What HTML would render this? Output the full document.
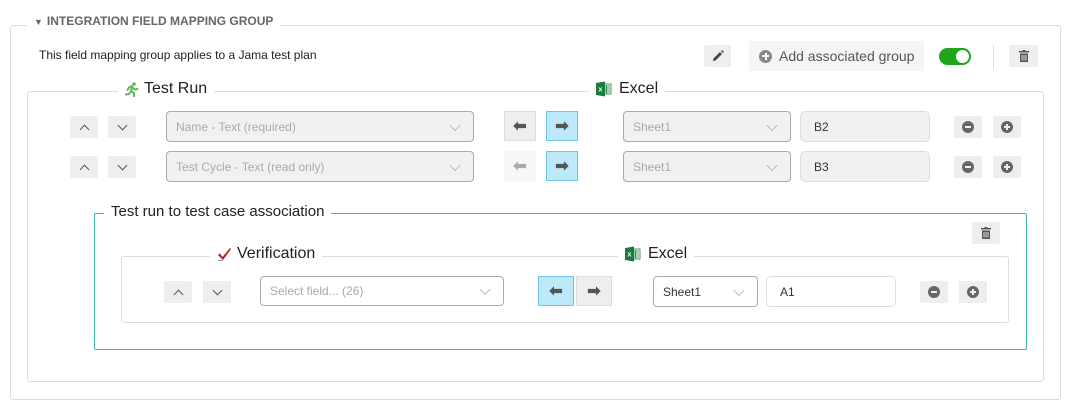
<!DOCTYPE html>
<html><head><style>
body{margin:0;width:1068px;height:416px;background:#fff;font-family:"Liberation Sans",sans-serif;position:relative;overflow:hidden}
.a{position:absolute;box-sizing:border-box}
.box{border:1px solid #ddd;border-radius:3px}
.leg{background:#fff;padding:0 7px;white-space:nowrap}
.btn{background:#eee;border-radius:2px;display:flex;align-items:center;justify-content:center}
.sel{border:1px solid #aaa;border-radius:4px;background:#f1f1f1;font-size:12px;color:#aaa;padding-left:9px;display:flex;align-items:center}
.sel:after{content:"";position:absolute;right:14px;top:50%;width:7px;height:7px;border-right:1.5px solid #bbb;border-bottom:1.5px solid #bbb;transform:translateY(-70%) rotate(45deg)}
.inp{border:1px solid #ddd;border-radius:5px;background:#f1f1f1;font-size:12px;color:#333;padding-left:13px;display:flex;align-items:center}
.ar{border:1px solid #ddd;background:#eee;display:flex;align-items:center;justify-content:center}
.ar.on{background:#bde9f9;border-color:#6cc8ee}
.rc{width:12px;height:12px;border-radius:50%;background:#666;position:relative}
.rc:before{content:"";position:absolute;left:3px;top:5px;width:6px;height:2px;background:#eee}
.rc.p:after{content:"";position:absolute;left:5px;top:3px;width:2px;height:6px;background:#eee}
.chev{width:6px;height:6px;border-left:1.5px solid #555;border-top:1.5px solid #555}
</style></head><body>
<div class="a box" style="left:10px;top:25px;width:1051px;height:375px"></div>
<div class="a leg" style="left:27px;top:13px;font-size:12px;font-weight:bold;color:#666;line-height:16px"><span style="font-size:9px;margin-right:4px">▼</span>INTEGRATION FIELD MAPPING GROUP</div>
<div class="a" style="left:39px;top:48px;font-size:12px;color:#222">This field mapping group applies to a Jama test plan</div>
<div class="a btn" style="left:704px;top:45px;width:27px;height:22px"><svg width="12" height="12" viewBox="0 0 12 12"><path d="M1 11 L1.5 8.5 L8 2 L10 4 L3.5 10.5 Z M9 1 L10 0 L12 2 L11 3 Z" fill="#444"/></svg></div>
<div class="a" style="left:749px;top:41px;width:175px;height:30px;background:#f5f5f5;display:flex;align-items:center;font-size:14px;color:#555"><span style="width:13px;height:13px;border-radius:50%;background:#888;margin:0 7px 0 10px;position:relative;display:inline-block"><span style="position:absolute;left:3px;top:5.5px;width:7px;height:2px;background:#fff"></span><span style="position:absolute;left:5.5px;top:3px;width:2px;height:7px;background:#fff"></span></span>Add associated group</div>
<div class="a" style="left:939px;top:48px;width:32px;height:17px;border-radius:9px;background:#1ea51e"><div style="position:absolute;right:2px;top:2px;width:13px;height:13px;border-radius:50%;background:#fff"></div></div>
<div class="a" style="left:993px;top:45px;width:1px;height:24px;background:#ddd"></div>
<div class="a btn" style="left:1009px;top:45px;width:29px;height:22px"><svg width="10" height="12" viewBox="0 0 10 12"><rect x="0" y="1" width="10" height="1.5" fill="#555"/><rect x="3.5" y="0" width="3" height="1.5" fill="#555"/><path d="M1 3.5 H9 V12 H1 Z" fill="#555"/><path d="M3 5 V10.5 M5 5 V10.5 M7 5 V10.5" stroke="#eee" stroke-width="0.9"/></svg></div>

<div class="a box" style="left:27px;top:91px;width:1017px;height:291px"></div>
<div class="a leg" style="left:118px;top:80px;font-size:16px;color:#222;display:flex;align-items:center"><svg width="14" height="15" viewBox="0 0 14 15" style="margin-right:5px"><circle cx="9" cy="2" r="1.8" fill="#5cb85c"/><path d="M7 4 L4 5.5 L2.5 8 M7 4 L6 9 L9 11 L9 14.5 M6 9 L4 12 L1 12.5 M7 5 L9.5 7.5 L12.5 7" stroke="#5cb85c" stroke-width="2" fill="none" stroke-linecap="round" stroke-linejoin="round"/></svg>Test Run</div>
<div class="a leg" style="left:589px;top:80px;font-size:16px;color:#222;display:flex;align-items:center"><svg width="16" height="16" viewBox="0 0 16 16" style="margin-right:7px"><rect x="6" y="3" width="9" height="10" fill="#fff" stroke="#1d7a3d" stroke-width="0.8"/><path d="M8 5H14M8 7H14M8 9H14M8 11H14M10.5 4V12.5" stroke="#1d7a3d" stroke-width="0.8"/><path d="M0 2 L9 0.5 V15.5 L0 14 Z" fill="#1d7a3d"/><text x="4.5" y="10.5" font-size="7" fill="#fff" text-anchor="middle" font-family="Liberation Sans" font-weight="bold">x</text></svg>Excel</div>

<div class="a btn" style="left:70px;top:116px;width:28px;height:22px"><div class="chev" style="transform:translateY(2px) rotate(45deg)"></div></div>
<div class="a btn" style="left:108px;top:116px;width:28px;height:22px"><div class="chev" style="transform:translateY(-2px) rotate(225deg)"></div></div>
<div class="a sel" style="left:166px;top:111px;width:308px;height:31px">Name - Text (required)</div>
<div class="a ar" style="left:504px;top:111px;width:32px;height:30px"><b style="color:#555;font-size:16px">⬅</b></div>
<div class="a ar on" style="left:546px;top:111px;width:32px;height:30px"><b style="color:#555;font-size:16px">➡</b></div>
<div class="a sel" style="left:623px;top:111px;width:168px;height:31px">Sheet1</div>
<div class="a inp" style="left:800px;top:111px;width:130px;height:31px">B2</div>
<div class="a btn" style="left:954px;top:116px;width:28px;height:22px"><div class="rc"></div></div>
<div class="a btn" style="left:993px;top:116px;width:28px;height:22px"><div class="rc p"></div></div>
<div class="a btn" style="left:70px;top:156px;width:28px;height:22px"><div class="chev" style="transform:translateY(2px) rotate(45deg)"></div></div>
<div class="a btn" style="left:108px;top:156px;width:28px;height:22px"><div class="chev" style="transform:translateY(-2px) rotate(225deg)"></div></div>
<div class="a sel" style="left:166px;top:151px;width:308px;height:31px">Test Cycle - Text (read only)</div>
<div class="a ar" style="left:504px;top:151px;width:32px;height:30px;background:#f7f7f7;border-color:#f7f7f7"><b style="color:#aaa;font-size:16px">⬅</b></div>
<div class="a ar on" style="left:546px;top:151px;width:32px;height:30px"><b style="color:#555;font-size:16px">➡</b></div>
<div class="a sel" style="left:623px;top:151px;width:168px;height:31px">Sheet1</div>
<div class="a inp" style="left:800px;top:151px;width:130px;height:31px">B3</div>
<div class="a btn" style="left:954px;top:156px;width:28px;height:22px"><div class="rc"></div></div>
<div class="a btn" style="left:993px;top:156px;width:28px;height:22px"><div class="rc p"></div></div>

<div class="a" style="left:94px;top:213px;width:933px;height:137px;border:1px solid #45b5b5;border-radius:2px"></div>
<div class="a leg" style="left:104px;top:203px;font-size:15px;color:#222">Test run to test case association</div>
<div class="a btn" style="left:972px;top:222px;width:28px;height:22px"><svg width="10" height="12" viewBox="0 0 10 12"><rect x="0" y="1" width="10" height="1.5" fill="#555"/><rect x="3.5" y="0" width="3" height="1.5" fill="#555"/><path d="M1 3.5 H9 V12 H1 Z" fill="#555"/><path d="M3 5 V10.5 M5 5 V10.5 M7 5 V10.5" stroke="#eee" stroke-width="0.9"/></svg></div>
<div class="a box" style="left:121px;top:256px;width:888px;height:67px"></div>
<div class="a leg" style="left:210px;top:245px;font-size:16px;color:#222;display:flex;align-items:center"><svg width="15" height="14" viewBox="0 0 15 14" style="margin-right:5px"><path d="M1 8 L3 6.5 L5.5 10 L13 1 L14 2 L6 13 Z" fill="#b01c22"/><path d="M1 13.5 H6" stroke="#999" stroke-width="1"/></svg>Verification</div>
<div class="a leg" style="left:618px;top:245px;font-size:16px;color:#222;display:flex;align-items:center"><svg width="16" height="16" viewBox="0 0 16 16" style="margin-right:7px"><rect x="6" y="3" width="9" height="10" fill="#fff" stroke="#1d7a3d" stroke-width="0.8"/><path d="M8 5H14M8 7H14M8 9H14M8 11H14M10.5 4V12.5" stroke="#1d7a3d" stroke-width="0.8"/><path d="M0 2 L9 0.5 V15.5 L0 14 Z" fill="#1d7a3d"/><text x="4.5" y="10.5" font-size="7" fill="#fff" text-anchor="middle" font-family="Liberation Sans" font-weight="bold">x</text></svg>Excel</div>

<div class="a btn" style="left:164px;top:281px;width:28px;height:22px"><div class="chev" style="transform:translateY(2px) rotate(45deg)"></div></div>
<div class="a btn" style="left:203px;top:281px;width:28px;height:22px"><div class="chev" style="transform:translateY(-2px) rotate(225deg)"></div></div>
<div class="a sel" style="left:260px;top:276px;width:244px;height:30px;background:#fff">Select field... (26)</div>
<div class="a ar on" style="left:538px;top:276px;width:36px;height:30px"><b style="color:#555;font-size:16px">⬅</b></div>
<div class="a ar" style="left:576px;top:276px;width:36px;height:30px"><b style="color:#555;font-size:16px">➡</b></div>
<div class="a sel" style="left:653px;top:276px;width:105px;height:31px;background:#fff;color:#333">Sheet1</div>
<div class="a inp" style="left:766px;top:276px;width:130px;height:31px;background:#fff">A1</div>
<div class="a btn" style="left:920px;top:281px;width:28px;height:22px"><div class="rc"></div></div>
<div class="a btn" style="left:959px;top:281px;width:28px;height:22px"><div class="rc p"></div></div>
</body></html>
